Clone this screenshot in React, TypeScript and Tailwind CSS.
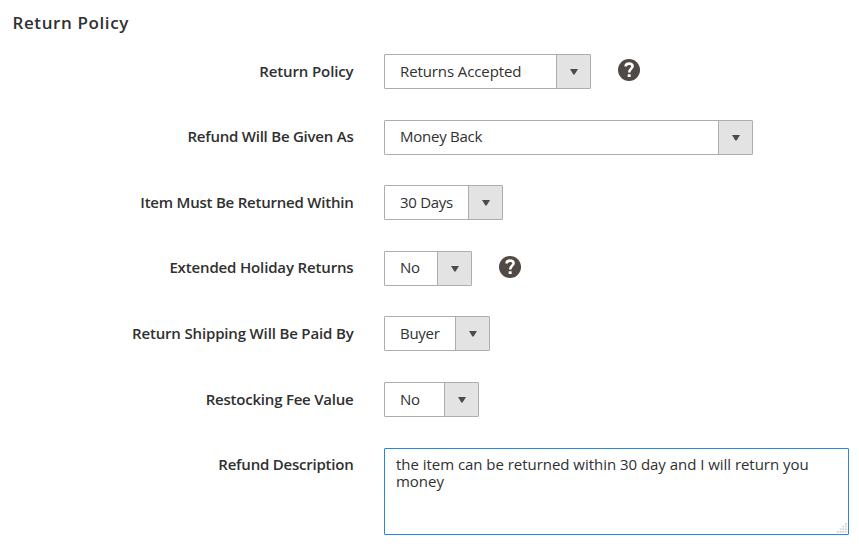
import React from 'react';

type Field = {
  label: string;
  value: string;
  width: string;
  labelStyle: string;
  valueStyle: string;
  help?: boolean;
};

const fields: Field[] = [
  { label: 'Return Policy', value: 'Returns Accepted', width: 'w-[207px]', labelStyle: 'tracking-[-0.12px] leading-[35px]', valueStyle: 'tracking-[-0.1px] leading-[33px]', help: true },
  { label: 'Refund Will Be Given As', value: 'Money Back', width: 'w-[369px]', labelStyle: 'tracking-[-0.23px] leading-[33px]', valueStyle: 'tracking-[-0.25px] leading-[31px]' },
  { label: 'Item Must Be Returned Within', value: '30 Days', width: 'w-[119px]', labelStyle: 'tracking-[-0.22px] leading-[35px]', valueStyle: 'tracking-[-0.3px] leading-[33px]' },
  { label: 'Extended Holiday Returns', value: 'No', width: 'w-[88px]', labelStyle: 'tracking-[-0.15px] leading-[33px]', valueStyle: 'tracking-[-0.3px] leading-[31px]', help: true },
  { label: 'Return Shipping Will Be Paid By', value: 'Buyer', width: 'w-[106px]', labelStyle: 'tracking-[-0.16px] leading-[35px]', valueStyle: 'tracking-[-0.3px] leading-[33px]' },
  { label: 'Restocking Fee Value', value: 'No', width: 'w-[95px]', labelStyle: 'tracking-[-0.22px] leading-[34px]', valueStyle: 'tracking-[-0.3px] leading-[33px]' },
];

function Select({ value, width, valueStyle }: { value: string; width: string; valueStyle: string }) {
  return (
    <button className={`flex h-[35px] shrink-0 items-start rounded-[1px] border border-[#adadad] bg-white text-left ${width}`}>
      <span className={`flex-1 whitespace-nowrap pl-[15px] ${valueStyle}`}>{value}</span>
      <span className="flex h-full w-[34px] shrink-0 items-center justify-center border-l border-[#adadad] bg-[#e3e3e3]">
        <svg className="mt-px" width="8" height="6" viewBox="0 0 8 6">
          <path d="M0 0h8L4.6 5.6H3.4z" fill="#514943" />
        </svg>
      </span>
    </button>
  );
}

function Help() {
  return (
    <svg className="ml-[27px] mt-[5px] shrink-0" width="22" height="22" viewBox="0 0 22 22" fill="none" aria-label="Help">
      <circle cx="11" cy="11" r="11" fill="#514943" />
      <path d="M7.6 7.5C7.7 5.4 9 4.6 11.1 4.6C13.3 4.6 14.6 5.7 14.6 7.3C14.6 9.6 11.2 9.8 11.2 13.4" stroke="white" strokeWidth="2.6" />
      <rect x="9.7" y="15.2" width="3" height="2.8" rx=".5" fill="white" />
    </svg>
  );
}

function ResizeGrip() {
  return (
    <svg className="pointer-events-none absolute bottom-[2px] right-[2px]" width="10" height="10" viewBox="0 0 10 10" fill="#d0d0d0">
      {[0, 1, 2, 3].map((row) =>
        [0, 1, 2, 3]
          .filter((col) => col + row >= 3)
          .map((col) => <rect key={`${row}-${col}`} x={col * 2.67} y={row * 2.67} width="1.7" height="1.7" />),
      )}
    </svg>
  );
}

export default function App() {
  return (
    <main className="h-[548px] w-[859px] overflow-hidden bg-white pt-[10px] font-['Open_Sans',sans-serif] text-[15px] text-[#303030]">
      <h1 className="h-[44px] pl-[12.5px] text-[17px] font-semibold leading-[25px] tracking-[0.6px]">Return Policy</h1>
      {fields.map((f) => (
        <div key={f.label} className="flex h-[65.6px] items-start">
          <label className={`w-[353.5px] shrink-0 text-right font-semibold ${f.labelStyle}`}>{f.label}</label>
          <div className="ml-[30.5px] flex">
            <Select value={f.value} width={f.width} valueStyle={f.valueStyle} />
            {f.help && <Help />}
          </div>
        </div>
      ))}
      <div className="flex items-start">
        <label className="w-[353.5px] shrink-0 text-right font-semibold leading-[33px] tracking-[-0.22px]">Refund Description</label>
        <div className="relative ml-[30.5px] h-[87px] w-[465px]">
          <textarea
            className="block h-full w-full resize-none rounded-[1px] border border-[#2488dc] bg-white px-[11px] py-[7px] leading-[17.6px] tracking-[-0.035px] outline-none"
            defaultValue="the item can be returned within 30 day and I will return you money"
          />
          <ResizeGrip />
        </div>
      </div>
    </main>
  );
}
